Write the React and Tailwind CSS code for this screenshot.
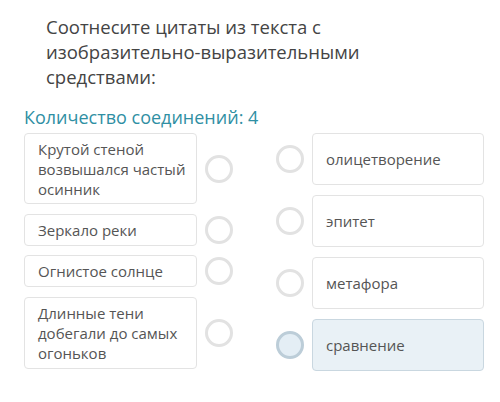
const quotes = [
  { id: 1, text: 'Крутой стеной возвышался частый осинник', h: 'h-[71px]' },
  { id: 2, text: 'Зеркало реки', h: 'h-[32px]' },
  { id: 3, text: 'Огнистое солнце', h: 'h-[32px]' },
  { id: 4, text: 'Длинные тени добегали до самых огоньков', h: 'h-[72px]' },
];

const means = [
  { id: 1, text: 'олицетворение' },
  { id: 2, text: 'эпитет' },
  { id: 3, text: 'метафора' },
  { id: 4, text: 'сравнение', active: true },
];

const Dot = ({ active }) => (
  <div
    className={
      active
        ? 'w-[28px] h-[28px] shrink-0 rounded-full border-[3px] border-[#bccdd8] bg-[#e4eef5]'
        : 'w-[28px] h-[28px] shrink-0 rounded-full border-[3px] border-[#e2e2e2] bg-white'
    }
  />
);

const App = () => {
  return (
    <div
      className="w-[500px] h-[402px] bg-white overflow-hidden"
      style={{ fontFamily: '"Open Sans", "Noto Sans", sans-serif' }}
    >
      <h2 className="pl-[46px] pt-[14px] text-[18.5px] leading-[25px] text-[#444]">
        Соотнесите цитаты из текста с
        <br />
        изобразительно-выразительными
        <br />
        средствами:
      </h2>

      <div className="pl-[24px] mt-[16px] text-[18px] leading-[24px] text-[#2f8fa3]">
        Количество соединений: 4
      </div>

      <div className="flex mt-[4px] pl-[24px]">
        {/* Left column: quotes */}
        <div className="flex flex-col gap-[9.5px]">
          {quotes.map((q) => (
            <div key={q.id} className="flex items-center">
              <div
                className={`w-[173px] ${q.h} flex items-center pl-[13px] pr-[6px] rounded-[4px] border border-[#e3e3e3] text-[15px] leading-[20px] text-[#555]`}
              >
                {q.text}
              </div>
              <div className="ml-[8px]">
                <Dot />
              </div>
            </div>
          ))}
        </div>

        {/* Right column: means */}
        <div className="flex flex-col gap-[10px] ml-[43px]">
          {means.map((m) => (
            <div key={m.id} className="flex items-center">
              <Dot active={m.active} />
              <div
                className={
                  m.active
                    ? 'ml-[8px] w-[172px] h-[52px] flex items-center px-[13px] rounded-[4px] border border-[#c9d7e0] bg-[#e9f1f6] text-[15px] text-[#555]'
                    : 'ml-[8px] w-[172px] h-[52px] flex items-center px-[13px] rounded-[4px] border border-[#e3e3e3] bg-white text-[15px] text-[#555]'
                }
              >
                {m.text}
              </div>
            </div>
          ))}
        </div>
      </div>
    </div>
  );
};

export default App;
